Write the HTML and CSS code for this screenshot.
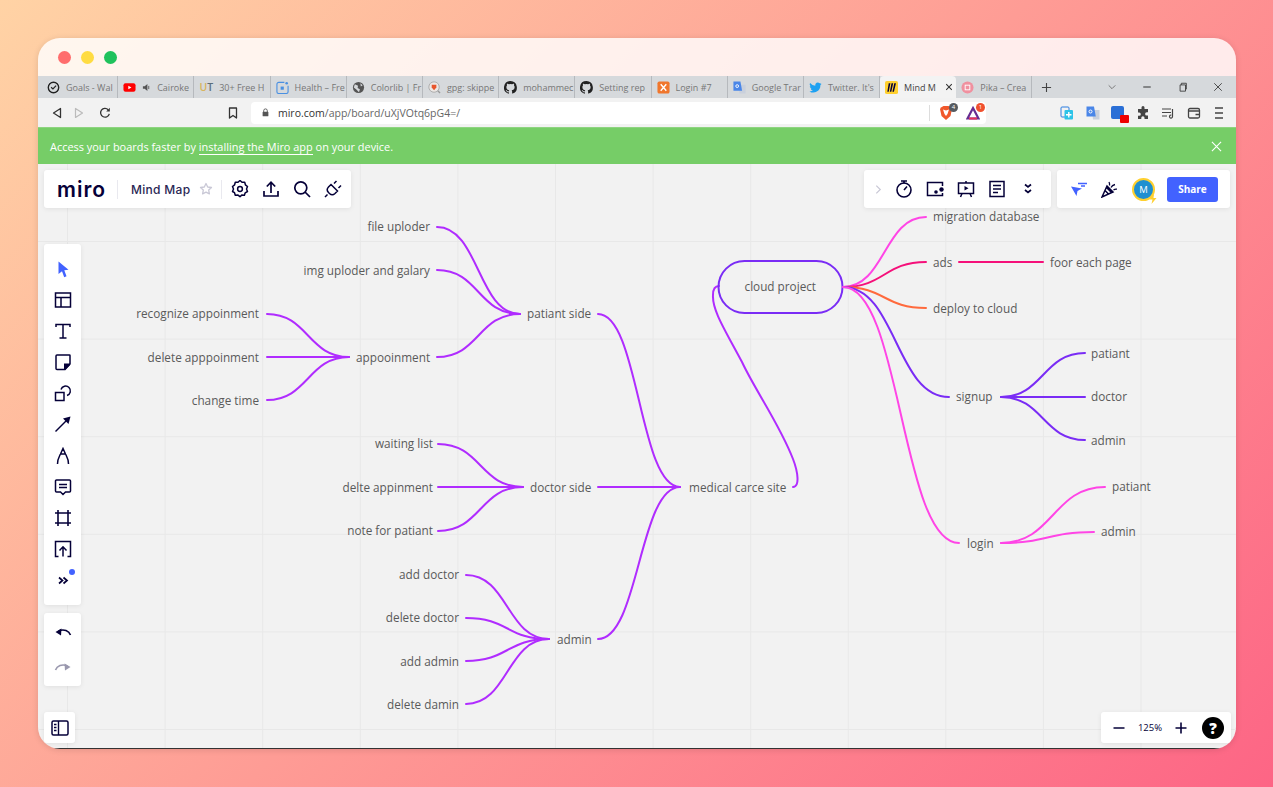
FILE: index.html
```html
<!DOCTYPE html>
<html>
<head>
    <title>Mind Map - Miro</title>
    <link rel="stylesheet" href="styles.css">
</head>
<body>
    <div class="window">
        <div class="title-bar">
            <span class="light light-red"></span>
            <span class="light light-yellow"></span>
            <span class="light light-green"></span>
        </div>

        <div class="tab-strip">
            <div class="tab">
                <svg class="tab-icon" viewBox="0 0 14 14"><circle cx="7" cy="7" r="5.6" fill="none" stroke="#222" stroke-width="1.5"/><path d="M4.4 6.8L6.4 8.6L9.8 5" fill="none" stroke="#222" stroke-width="1.3"/></svg>
                <span class="tab-text">Goals - Wal</span>
            </div>
            <div class="tab">
                <svg class="tab-icon" viewBox="0 0 14 14"><rect x="0.5" y="2.5" width="13" height="9" rx="2.2" fill="#f00"/><path d="M5.7 5v4l3.4-2z" fill="#fff"/></svg>
                <svg class="tab-sound" viewBox="0 0 10 10"><path d="M1 3.5h2L6 1v8L3 6.5H1z" fill="#555"/><path d="M7.5 3.2v3.6" stroke="#555"/></svg>
                <span class="tab-text">Cairoke</span>
            </div>
            <div class="tab">
                <span class="tab-ut"><b>U</b><i>T</i></span>
                <span class="tab-text">30+ Free H</span>
            </div>
            <div class="tab">
                <svg class="tab-icon" viewBox="0 0 14 14"><path d="M9 1.5H3a2 2 0 0 0-2 2v8a2 2 0 0 0 2 2h8a2 2 0 0 0 2-2V5" fill="none" stroke="#4a90e2" stroke-width="1.2"/><rect x="5" y="6" width="3.4" height="3.4" fill="#4a90e2"/><circle cx="11.5" cy="2.5" r="1.4" fill="#4a90e2"/></svg>
                <span class="tab-text">Health – Fre</span>
            </div>
            <div class="tab">
                <svg class="tab-icon" viewBox="0 0 14 14"><circle cx="7" cy="7" r="6" fill="#555"/><path d="M3 3.5L6.5 5L6 7.5L8.5 9L7.5 12L5 9.5L2 7zM9 2.5L11.5 4.5L9.5 6z" fill="#d6d9dc"/></svg>
                <span class="tab-text">Colorlib | Fr</span>
            </div>
            <div class="tab">
                <svg class="tab-icon" viewBox="0 0 14 14"><circle cx="6.5" cy="6.5" r="5.6" fill="#ece7e4" stroke="#aaa"/><path d="M4 4h5v3l-2.5 3L4 7z" fill="#e8552c"/><path d="M10.5 10.5l2.5 2.5" stroke="#999" stroke-width="1.4"/></svg>
                <span class="tab-text">gpg: skippe</span>
            </div>
            <div class="tab">
                <svg class="tab-icon" viewBox="0 0 16 16"><path d="M8 0a8 8 0 0 0-2.5 15.6c.4.1.5-.2.5-.4v-1.4c-2.2.5-2.7-1-2.7-1-.4-.9-.9-1.2-.9-1.2-.7-.5.1-.5.1-.5.8.1 1.2.8 1.2.8.7 1.2 1.9.9 2.3.7.1-.5.3-.9.5-1.100-1.800-.2-3.600-.9-3.600-4 0-.9.300-1.600.8-2.100-.1-.2-.4-1 .1-2.100 0 0 .7-.2 2.200.8a7.500 7.500 0 0 1 4 0c1.500-1 2.200-.8 2.200-.8.4 1.100.2 1.900.1 2.100.5.600.8 1.300.8 2.100 0 3.100-1.900 3.700-3.700 3.900.3.300.6.800.6 1.500v2.200c0 .2.100.5.600.4A8 8 0 0 0 8 0z" fill="#222"/></svg>
                <span class="tab-text">mohammec</span>
            </div>
            <div class="tab">
                <svg class="tab-icon" viewBox="0 0 16 16"><path d="M8 0a8 8 0 0 0-2.500 15.600c.4.100.5-.2.5-.4v-1.400c-2.200.5-2.700-1-2.700-1-.4-.9-.9-1.200-.9-1.200-.7-.5.1-.5.1-.5.8.1 1.200.8 1.200.8.7 1.200 1.900.9 2.300.7.100-.5.300-.9.500-1.100-1.800-.2-3.600-.9-3.600-4 0-.9.300-1.600.8-2.100-.1-.2-.4-1 .1-2.100 0 0 .7-.2 2.200.8a7.500 7.500 0 0 1 4 0c1.500-1 2.200-.8 2.200-.8.4 1.100.2 1.900.1 2.100.5.600.8 1.300.8 2.100 0 3.100-1.900 3.700-3.700 3.900.3.300.6.800.6 1.500v2.200c0 .2.100.5.600.4A8 8 0 0 0 8 0z" fill="#222"/></svg>
                <span class="tab-text">Setting rep</span>
            </div>
            <div class="tab">
                <svg class="tab-icon" viewBox="0 0 14 14"><rect x="0.5" y="0.5" width="13" height="13" rx="2" fill="#f0762c"/><path d="M4 3.5L7 7L4 10.5M10 3.5L7 7L10 10.5" fill="none" stroke="#fff" stroke-width="1.5"/></svg>
                <span class="tab-text">Login #7</span>
            </div>
            <div class="tab">
                <svg class="tab-icon" viewBox="0 0 14 14"><path d="M6 4h7.5v9.5H7z" fill="#c9d0dc"/><path d="M0.5 0.5h7.5l1.800 10H0.5z" fill="#4a86e8"/><circle cx="4.5" cy="5.5" r="1.5" fill="none" stroke="#fff"/></svg>
                <span class="tab-text">Google Trar</span>
            </div>
            <div class="tab">
                <svg class="tab-icon" viewBox="0 0 16 16"><path d="M15.500 3.300c-.6.300-1.200.4-1.800.5.600-.4 1.100-1 1.400-1.700-.6.400-1.300.6-2 .8a3.100 3.100 0 0 0-5.300 2.800A8.800 8.800 0 0 1 1.400 2.500a3.100 3.100 0 0 0 1 4.100c-.5 0-1-.2-1.400-.4 0 1.500 1.100 2.800 2.500 3.100-.5.100-.9.100-1.400.1.400 1.200 1.500 2.100 2.900 2.100A6.200 6.200 0 0 1 .5 12.800 8.800 8.800 0 0 0 14 5c.6-.4 1.100-1 1.500-1.700z" fill="#1da1f2"/></svg>
                <span class="tab-text">Twitter. It's</span>
            </div>
            <div class="tab tab-active">
                <svg class="tab-icon" viewBox="0 0 14 14"><rect width="14" height="14" rx="2" fill="#ffd02f"/><path d="M4 2.500L5.800 2.500L4 11.500L2.500 11.500zM7 2.500L8.800 2.500L6.800 11.500L5.200 11.500zM10 2.500L11.800 2.500L9.600 11.500L8 11.500z" fill="#050038"/></svg>
                <span class="tab-text">Mind M</span>
                <svg class="tab-close" viewBox="0 0 10 10"><path d="M1.500 1.500l7 7M8.500 1.500l-7 7" stroke="#333" stroke-width="1.300"/></svg>
            </div>
            <div class="tab">
                <svg class="tab-icon" viewBox="0 0 14 14"><circle cx="7" cy="7" r="6.500" fill="#f0909f"/><rect x="4.500" y="4.500" width="5" height="5" fill="none" stroke="#fff"/></svg>
                <span class="tab-text">Pika – Crea</span>
            </div>
            <svg class="tab-plus" viewBox="0 0 12 12"><path d="M6 1v10M1 6h10" stroke="#444" stroke-width="1.200"/></svg>
            <div class="window-controls">
                <svg class="win-btn" viewBox="0 0 12 12"><path d="M2 4l4 4 4-4" fill="none" stroke="#666"/></svg>
                <svg class="win-btn" viewBox="0 0 12 12"><path d="M1.500 6h9" stroke="#333" stroke-width="1.200"/></svg>
                <svg class="win-btn" viewBox="0 0 12 12"><path d="M2.500 3.500h6.500v7.500h-6.500zM4 3.500v-2h6v7h-1" fill="none" stroke="#333"/></svg>
                <svg class="win-btn" viewBox="0 0 12 12"><path d="M1.500 1.500l9 9M10.500 1.500l-9 9" stroke="#333"/></svg>
            </div>
        </div>

        <div class="nav-bar">
            <svg class="nav-icon nav-back" viewBox="0 0 12 12"><path d="M9.500 1.500v9L2.500 6z" fill="none" stroke="#333" stroke-width="1.300" stroke-linejoin="round"/></svg>
            <svg class="nav-icon nav-forward" viewBox="0 0 12 12"><path d="M2.500 1.500v9L9.500 6z" fill="none" stroke="#bbb" stroke-width="1.200" stroke-linejoin="round"/></svg>
            <svg class="nav-icon nav-reload" viewBox="0 0 12 12"><path d="M10.300 6.800A4.400 4.400 0 1 1 9.200 2.700" fill="none" stroke="#333" stroke-width="1.300"/><path d="M10.800 0.800v3.600H7.200z" fill="#333"/></svg>
            <svg class="nav-icon nav-bookmark" viewBox="0 0 12 12"><path d="M2.500 1h7v10L6 8.500 2.500 11z" fill="none" stroke="#333" stroke-width="1.300" stroke-linejoin="round"/></svg>
            <div class="url-field">
                <svg class="url-lock" viewBox="0 0 10 10"><path d="M3 4.500V3a2 2 0 0 1 4 0v1.500" fill="none" stroke="#555"/><rect x="1.800" y="4.300" width="6.400" height="5" rx="0.800" fill="#555"/></svg>
                <span class="url-text"><b>miro.com</b>/app/board/uXjVOtq6pG4=/</span>
                <span class="url-sep"></span>
                <span class="url-badge">
                    <svg viewBox="0 0 14 16"><path d="M2 2.500L4.500 1h5L12 2.500 13 4l-1.500 7L7 15l-4.500-4L1 4z" fill="#f1582c"/><path d="M4 4.500L7 5.500 10 4.500 8.500 9 7 11 5.500 9z" fill="#fff"/></svg>
                    <i class="badge-count badge-gray">4</i>
                </span>
                <span class="url-badge">
                    <svg viewBox="0 0 14 16"><path d="M7 3L12.500 13.500H1.500z" fill="none" stroke="#662d91" stroke-width="2.200"/><path d="M3 13.500h8" stroke="#e8315a" stroke-width="2.200"/></svg>
                    <i class="badge-count badge-red">1</i>
                </span>
            </div>
            <div class="ext-icons">
                <svg class="ext-icon" viewBox="0 0 14 14"><rect x="1" y="1" width="8" height="10" rx="1" fill="none" stroke="#2b7de0"/><rect x="4.500" y="4" width="8.500" height="9.500" rx="1" fill="#2cc3e8"/><path d="M8.800 6v5.500M6 8.700h5.500" stroke="#fff" stroke-width="1.400"/></svg>
                <svg class="ext-icon" viewBox="0 0 14 14"><path d="M6 4h7.500v9.500H7z" fill="#c9d0dc"/><path d="M0.500 0.500h7.500l1.800 10H0.500z" fill="#4a86e8"/><circle cx="4.500" cy="5.500" r="1.500" fill="none" stroke="#fff"/></svg>
                <span class="ext-blue"><i></i></span>
                <svg class="ext-icon" viewBox="0 0 14 14"><path d="M5.500 1.500a1.500 1.500 0 0 1 3 0V3H12v3.300h-1.300a1.600 1.600 0 0 0 0 3.200H12V13H8.500v-1.200a1.600 1.600 0 0 0-3.200 0V13H2V9.800h1.200a1.600 1.600 0 0 0 0-3.200H2V3h3.500z" fill="#444"/></svg>
                <svg class="ext-icon" viewBox="0 0 14 14"><path d="M1 3h9M1 6.500h9M1 10h5" stroke="#444" stroke-width="1.200"/><path d="M11.500 3v7.500a1.500 1.500 0 1 1-1.200-1.400" fill="none" stroke="#444" stroke-width="1.200"/></svg>
                <svg class="ext-icon" viewBox="0 0 14 14"><rect x="1.500" y="2.500" width="11" height="9.500" rx="1.500" fill="none" stroke="#444" stroke-width="1.300"/><path d="M1.500 5h11M8.500 8.500h4" stroke="#444" stroke-width="1.300"/></svg>
                <svg class="ext-icon" viewBox="0 0 14 14"><path d="M3 2h8M3 7h8M3 12h8" stroke="#444" stroke-width="1.300"/></svg>
            </div>
        </div>

        <div class="banner">
            <span>Access your boards faster by <u>installing the Miro app</u> on your device.</span>
            <svg class="banner-close" viewBox="0 0 12 12"><path d="M1 1l10 10M11 1L1 11" stroke="#fff" stroke-width="1.200"/></svg>
        </div>

        <div class="canvas">
            <svg class="mind-map" viewBox="38 164 1198 585">
                <g class="edges edges-purple">
                    <path d="M437 227C479 227 478 314 520 314"/>
                    <path d="M437 270C479 270 478 314 520 314"/>
                    <path d="M437 357C479 357 478 314 520 314"/>
                    <path d="M349 357C308 357 308 314 267 314"/>
                    <path d="M349 357H267"/>
                    <path d="M349 357C308 357 308 400 267 400"/>
                    <path d="M598 314C639 314 639 487 680 487"/>
                    <path d="M523 487C480 487 481 444 438 444"/>
                    <path d="M523 487H438"/>
                    <path d="M523 487C480 487 481 531 438 531"/>
                    <path d="M598 487H680"/>
                    <path d="M598 639C639 639 639 487 680 487"/>
                    <path d="M549 639C507 639 508 575 466 575"/>
                    <path d="M549 639C507 639 508 618 466 618"/>
                    <path d="M549 639C507 639 508 661 466 661"/>
                    <path d="M549 639C507 639 508 704 466 704"/>
                    <path d="M793 487C800 487 798 472 793 459C780 425 755 390 742 362C725 330 712 310 713 295C713 288 716 286 719 286"/>
                </g>
                <rect class="cloud-node" x="718.500" y="261" width="124" height="52" rx="26"/>
                <g class="edges">
                    <path class="edge-pink" d="M843 287C885 287 884 217 926 217"/>
                    <path class="edge-red" d="M843 287C885 287 884 262 926 262"/>
                    <path class="edge-red" d="M959 262H1043"/>
                    <path class="edge-orange" d="M843 287C885 287 884 308 926 308"/>
                    <path class="edge-violet" d="M843 287C896 287 896 397 949 397"/>
                    <path class="edge-pink" d="M843 287C901 287 901 543 959 543"/>
                    <path class="edge-violet" d="M1001 397C1043 397 1043 353 1085 353"/>
                    <path class="edge-violet" d="M1001 397H1085"/>
                    <path class="edge-violet" d="M1001 397C1043 397 1043 440 1085 440"/>
                    <path class="edge-pink" d="M1001 543C1053 543 1053 487 1105 487"/>
                    <path class="edge-pink" d="M1001 543C1048 543 1047 532 1094 532"/>
                </g>
                <g class="labels">
                    <text x="430" y="231" text-anchor="end">file uploder</text>
                    <text x="430" y="275" text-anchor="end">img uploder and galary</text>
                    <text x="259" y="318" text-anchor="end">recognize appoinment</text>
                    <text x="259" y="362" text-anchor="end">delete apppoinment</text>
                    <text x="259" y="405" text-anchor="end">change time</text>
                    <text x="356" y="362">appooinment</text>
                    <text x="527" y="318">patiant side</text>
                    <text x="433" y="448" text-anchor="end">waiting list</text>
                    <text x="433" y="492" text-anchor="end">delte appinment</text>
                    <text x="433" y="535" text-anchor="end">note for patiant</text>
                    <text x="530" y="492">doctor side</text>
                    <text x="459" y="579" text-anchor="end">add doctor</text>
                    <text x="459" y="622" text-anchor="end">delete doctor</text>
                    <text x="459" y="666" text-anchor="end">add admin</text>
                    <text x="459" y="709" text-anchor="end">delete damin</text>
                    <text x="557" y="644">admin</text>
                    <text x="689" y="492">medical carce site</text>
                    <text x="744.500" y="291">cloud project</text>
                    <text x="933" y="221">migration database</text>
                    <text x="933" y="267">ads</text>
                    <text x="1050" y="267">foor each page</text>
                    <text x="933" y="313">deploy to cloud</text>
                    <text x="956" y="401">signup</text>
                    <text x="1091" y="358">patiant</text>
                    <text x="1091" y="401">doctor</text>
                    <text x="1091" y="445">admin</text>
                    <text x="967" y="548">login</text>
                    <text x="1112" y="491">patiant</text>
                    <text x="1101" y="536">admin</text>
                </g>
            </svg>

            <div class="panel panel-board">
                <span class="miro-logo">miro</span>
                <span class="panel-sep"></span>
                <span class="board-name">Mind Map</span>
                <svg class="star-icon" viewBox="0 0 14 14"><path d="M7 1.500l1.700 3.500 3.800.5-2.800 2.600.7 3.800L7 10.100l-3.400 1.800.7-3.800L1.500 5.500l3.800-.5z" fill="none" stroke="#c9c8d6" stroke-width="1.300" stroke-linejoin="round"/></svg>
                <span class="panel-sep"></span>
                <svg class="tool-icon" viewBox="0 0 18 18"><path d="M9 1.500l2 1.800 2.700-.1.700 2.600 2.100 1.700-1 2.500 1 2.500-2.300 1.300-.8 2.500-2.700-.2-1.700 1.600-2-1.600-2.700.2-.8-2.600L1.500 12.500l1-2.500-1-2.500 2.100-1.700.7-2.600 2.700.1z" transform="translate(0 -1)" fill="none" stroke="#050038" stroke-width="1.500" stroke-linejoin="round"/><circle cx="9" cy="9" r="2.400" fill="none" stroke="#050038" stroke-width="1.500"/></svg>
                <svg class="tool-icon" viewBox="0 0 18 18"><path d="M2 11v5h14v-5M9 13V2.500M4.800 6.500L9 2.200l4.200 4.300" fill="none" stroke="#050038" stroke-width="1.700"/></svg>
                <svg class="tool-icon" viewBox="0 0 18 18"><circle cx="7.800" cy="7.800" r="6" fill="none" stroke="#050038" stroke-width="1.700"/><path d="M12 12l5 5" stroke="#050038" stroke-width="1.700"/></svg>
                <svg class="tool-icon" viewBox="0 0 18 18"><path d="M7 4.500l6.500 6.500-2.500 2.500a4 4 0 0 1-5.500 0l-1-1a4 4 0 0 1 0-5.500zM3.500 14.500L1 17M10 3.500L12.500 1M14.500 8L17 5.500" fill="none" stroke="#050038" stroke-width="1.500"/></svg>
            </div>

            <div class="panel panel-tools">
                <svg class="tool-icon" viewBox="0 0 18 18"><path d="M4.500 1.500l10 8.200-4.200.6 2.200 6-2.300.9-2.200-6-3.500 2.800z" fill="#4262ff"/></svg>
                <svg class="tool-icon" viewBox="0 0 18 18"><path d="M1.500 2h15v14h-15zM1.500 6.500h15M7 6.500V16" fill="none" stroke="#050038" stroke-width="1.500"/></svg>
                <svg class="tool-icon" viewBox="0 0 18 18"><path d="M2 5V2.500h14V5M9 2.500V16M5.500 16h7" fill="none" stroke="#050038" stroke-width="1.500"/></svg>
                <svg class="tool-icon" viewBox="0 0 18 18"><path d="M2 3a1 1 0 0 1 1-1h12.500a.5.5 0 0 1 .5.500V11l-5 5.500H3a1 1 0 0 1-1-1z" fill="none" stroke="#050038" stroke-width="1.500"/><path d="M16 10.500v1.500l-4.500 4.500H10v-6z" fill="#050038"/></svg>
                <svg class="tool-icon" viewBox="0 0 18 18"><path d="M1.500 8.500h8.500V16.500H1.500z" fill="none" stroke="#050038" stroke-width="1.500"/><path d="M7 5.500a4.800 4.800 0 1 1 6 6" fill="none" stroke="#050038" stroke-width="1.500"/></svg>
                <svg class="tool-icon" viewBox="0 0 18 18"><path d="M1.500 16.500L13 5" stroke="#050038" stroke-width="1.500"/><path d="M16.500 1.500l-2 7.500-5.500-5.500z" fill="#050038"/></svg>
                <svg class="tool-icon" viewBox="0 0 18 18"><path d="M3.500 17C3.500 12 5 10 6.500 7L9 1.500 11.500 7C13 10 14.500 12 14.500 17M6.500 7H11.500" fill="none" stroke="#050038" stroke-width="1.500"/></svg>
                <svg class="tool-icon" viewBox="0 0 18 18"><path d="M2.500 2h13a1 1 0 0 1 1 1v10a1 1 0 0 1-1 1h-4L9 16.500 6.500 14h-4a1 1 0 0 1-1-1V3a1 1 0 0 1 1-1z" fill="none" stroke="#050038" stroke-width="1.500"/><path d="M5 6.500h8M5 9.500h8" stroke="#050038" stroke-width="1.500"/></svg>
                <svg class="tool-icon" viewBox="0 0 18 18"><path d="M1 4h16M1 14h16M4 1v16M14 1v16" stroke="#050038" stroke-width="1.600"/></svg>
                <svg class="tool-icon" viewBox="0 0 18 18"><path d="M4.500 16.500h-3v-15h15v15h-3M9 16.500V7M5.500 10.500L9 6.800l3.500 3.700" fill="none" stroke="#050038" stroke-width="1.500"/></svg>
                <span class="more-tools">
                    <svg class="tool-icon" viewBox="0 0 18 18"><path d="M5 6.500L8.500 9.500 5 12.500M9.500 6.500l3.500 3-3.500 3" fill="none" stroke="#050038" stroke-width="1.700"/></svg>
                    <i class="more-dot"></i>
                </span>
            </div>

            <div class="panel panel-undo">
                <svg class="tool-icon" viewBox="0 0 18 18"><path d="M16.500 12C15 8 10 5.500 4.500 8" fill="none" stroke="#050038" stroke-width="1.600"/><path d="M1.500 9l5.500 3.500.5-7z" fill="#050038"/></svg>
                <svg class="tool-icon tool-dim" viewBox="0 0 18 18"><path d="M1.500 12C3 8 8 5.500 13.500 8" fill="none" stroke="#050038" stroke-width="1.600"/><path d="M16.500 9l-5.500 3.500-.5-7z" fill="#050038"/></svg>
            </div>

            <div class="panel panel-sidebar">
                <svg class="tool-icon" viewBox="0 0 18 18"><rect x="1" y="2" width="16" height="14" rx="1.500" fill="none" stroke="#050038" stroke-width="1.500"/><path d="M7.500 2v14M3 5.500h2.500M3 8.500h2.500M3 11.500h2.500" stroke="#050038" stroke-width="1.400"/></svg>
            </div>

            <div class="panel panel-actions">
                <svg class="action-chevron" viewBox="0 0 8 12"><path d="M1.500 1.500L6 6l-4.500 4.500" fill="none" stroke="#c9c8d6" stroke-width="1.400"/></svg>
                <svg class="tool-icon" viewBox="0 0 18 18"><circle cx="9" cy="10" r="7" fill="none" stroke="#050038" stroke-width="1.600"/><path d="M6 1h6M9 1v2.500M9 10l3-3.500" stroke="#050038" stroke-width="1.600"/></svg>
                <svg class="tool-icon" viewBox="0 0 18 18"><path d="M16.500 6V2.500h-15v13h15V13" fill="none" stroke="#050038" stroke-width="1.500"/><circle cx="15.500" cy="9.500" r="2.200" fill="#050038"/><circle cx="10" cy="12" r="1.800" fill="#050038"/></svg>
                <svg class="tool-icon" viewBox="0 0 18 18"><rect x="1.500" y="3" width="15" height="10.500" fill="none" stroke="#050038" stroke-width="1.500"/><path d="M9 1v2M5 13.500L3.500 17M13 13.500l1.500 3.500" stroke="#050038" stroke-width="1.500"/><path d="M7.500 6v4.500L11.500 8.200z" fill="#050038"/></svg>
                <svg class="tool-icon" viewBox="0 0 18 18"><rect x="2" y="1.500" width="14" height="15" fill="none" stroke="#050038" stroke-width="1.500"/><path d="M5 5.500h8M5 9h8M5 12.500h5" stroke="#050038" stroke-width="1.500"/></svg>
                <svg class="tool-icon" viewBox="0 0 18 18"><path d="M6 4.500l3 2.500 3-2.500M6 10l3 2.500 3-2.500" fill="none" stroke="#050038" stroke-width="1.700"/></svg>
            </div>

            <div class="panel panel-share">
                <svg class="tool-icon" viewBox="0 0 18 18"><path d="M1 6.500l11 2-4.500 2.500-1 5z" fill="#4262ff"/><path d="M8 3.500h9M11 6h4" stroke="#4262ff" stroke-width="1.300"/></svg>
                <svg class="tool-icon" viewBox="0 0 18 18"><path d="M1 17L6 6l6 6zM4 10.500l3.500 3.500M5.500 7.500l5 5" fill="none" stroke="#050038" stroke-width="1.500"/><path d="M10 7.500c1-2 2-2.500 4-3M12.500 10c1-.8 2-1 3.500-.8M8.500 5.500c.3-1.500 0-2.500-.5-3.500" fill="none" stroke="#050038" stroke-width="1.300"/></svg>
                <span class="avatar">M<svg class="avatar-bolt" viewBox="0 0 8 10"><path d="M5 0L0.500 5.500h3L2.500 10 7.500 4H4.500z" fill="#ffd02f"/></svg></span>
                <span class="share-button">Share</span>
            </div>

            <div class="panel panel-zoom">
                <svg class="zoom-icon" viewBox="0 0 12 12"><path d="M0.500 6h11" stroke="#050038" stroke-width="1.600"/></svg>
                <span class="zoom-value">125%</span>
                <svg class="zoom-icon" viewBox="0 0 12 12"><path d="M0.500 6h11M6 0.500v11" stroke="#050038" stroke-width="1.600"/></svg>
                <span class="help-button">?</span>
            </div>
        </div>
    </div>
</body>
</html>
```

FILE: styles.css
```css
html, body {
    margin: 0;
    height: 100%;
}
body {
    box-sizing: border-box;
    height: 787px;
    padding: 38px 37px 38px 38px;
    background: linear-gradient(135deg, #ffd3a5 0%, #fd6585 100%);
    font-family: 'Open Sans', sans-serif;
    overflow: hidden;
}
.window {
    display: flex;
    flex-direction: column;
    height: 100%;
    border-radius: 22px;
    overflow: hidden;
    box-shadow: 0 1px 6px rgba(0,0,0,0.12);
}

/* traffic lights */
.title-bar {
    display: flex;
    align-items: center;
    gap: 10px;
    height: 38px;
    padding-left: 19.5px;
    flex-shrink: 0;
    background: rgba(255,255,255,0.82);
}
.light {
    width: 13px;
    height: 13px;
    border-radius: 50%;
}
.light-red { background-color: #ff6d6d; }
.light-yellow { background-color: #ffdc42; }
.light-green { background-color: #1fc25c; }

/* tabs */
.tab-strip {
    display: flex;
    align-items: center;
    height: 22px;
    padding-left: 4px;
    flex-shrink: 0;
    background-color: #d6d9dc;
}
.tab {
    display: flex;
    align-items: center;
    gap: 6px;
    box-sizing: border-box;
    width: 76.2px;
    height: 22px;
    padding: 0 3px 0 5px;
    border-right: 1px solid #b6b9bd;
    overflow: hidden;
    flex-shrink: 0;
}
.tab-active {
    background-color: #f3f3f3;
    border-radius: 4px 4px 0 0;
    border-right: none;
}
.tab-icon {
    width: 13px;
    height: 13px;
    flex-shrink: 0;
}
.tab-sound {
    width: 9px;
    height: 9px;
    flex-shrink: 0;
}
.tab-ut {
    font-size: 10.5px;
    font-weight: 600;
    flex-shrink: 0;
}
.tab-ut b { color: #d8b45c; font-weight: 600; }
.tab-ut i { color: #5a6d7a; font-style: normal; }
.tab-text {
    font-size: 9px;
    color: #777;
    white-space: nowrap;
    flex: 1;
}
.tab-active .tab-text { color: #444; }
.tab-close {
    width: 8px;
    height: 8px;
    flex-shrink: 0;
}
.tab-plus {
    width: 11px;
    height: 11px;
    margin-left: 9px;
}
.window-controls {
    display: flex;
    align-items: center;
    margin-left: auto;
    gap: 25.5px;
    padding-right: 13px;
}
.win-btn {
    width: 10px;
    height: 10px;
}

/* address bar */
.nav-bar {
    display: flex;
    align-items: center;
    height: 29px;
    padding-left: 13px;
    flex-shrink: 0;
    background-color: #f2f2f2;
}
.nav-icon {
    width: 12px;
    height: 12px;
    flex-shrink: 0;
}
.nav-forward { margin-left: 10px; }
.nav-reload { margin-left: 14px; }
.nav-bookmark { margin-left: 116px; }
.url-field {
    display: flex;
    align-items: center;
    width: 735px;
    height: 22px;
    margin-left: 12px;
    padding-left: 10px;
    box-sizing: border-box;
    background-color: #fff;
    border-radius: 4px;
    flex-shrink: 0;
}
.url-lock {
    width: 9px;
    height: 9px;
    flex-shrink: 0;
}
.url-text {
    margin-left: 8px;
    font-size: 10.5px;
    color: #666;
}
.url-text b {
    font-weight: 400;
    color: #333;
}
.url-sep {
    width: 1px;
    height: 16px;
    margin-left: auto;
    background-color: #ddd;
}
.url-badge {
    position: relative;
    width: 14px;
    height: 16px;
    margin-left: 9px;
    margin-right: 3px;
}
.url-badge + .url-badge {
    margin-left: 10px;
    margin-right: 6px;
}
.url-badge svg {
    display: block;
    width: 14px;
    height: 16px;
}
.badge-count {
    position: absolute;
    top: -2px;
    right: -5px;
    width: 9px;
    height: 9px;
    border-radius: 50%;
    font-size: 6px;
    line-height: 9px;
    font-style: normal;
    text-align: center;
    color: #fff;
}
.badge-gray { background-color: #555a60; }
.badge-red { background-color: #f0502e; }
.ext-icons {
    display: flex;
    align-items: center;
    gap: 11.5px;
    margin-left: 74px;
}
.ext-icon {
    width: 14px;
    height: 14px;
    flex-shrink: 0;
}
.ext-blue {
    position: relative;
    width: 13px;
    height: 13px;
    background-color: #2a6fd6;
    border-radius: 2px;
}
.ext-blue i {
    position: absolute;
    right: -5px;
    bottom: -4px;
    width: 9px;
    height: 8px;
    background-color: #ee0000;
    border-radius: 1px;
}

/* install banner */
.banner {
    display: flex;
    align-items: center;
    justify-content: space-between;
    height: 37px;
    padding: 0 14px 0 12px;
    flex-shrink: 0;
    background-color: #76cd67;
    border-top: 1px solid #8ed480;
    box-sizing: border-box;
    font-size: 10.95px;
    color: #fff;
}
.banner u {
    text-decoration: none;
    border-bottom: 1px solid #fff;
}
.banner-close {
    width: 11px;
    height: 11px;
}

/* board */
.canvas {
    position: relative;
    flex: 1;
    background-color: #f2f2f2;
    background-image:
        linear-gradient(to right, #e8e8e8 1px, transparent 1px),
        linear-gradient(to bottom, #e8e8e8 1px, transparent 1px);
    background-size: 97.6px 97.6px;
    background-position: 29px 77px;
    border-bottom: 1px solid #333;
    overflow: hidden;
}
.mind-map {
    display: block;
    width: 1198px;
    height: 585px;
}
.edges path {
    fill: none;
    stroke-width: 2;
    stroke-linecap: round;
}
.edges-purple path { stroke: #b02cff; }
.edge-pink { stroke: #ff45e6; }
.edge-red { stroke: #f5107a; }
.edge-orange { stroke: #ff6a3d; }
.edge-violet { stroke: #7a2cf5; }
.cloud-node {
    fill: none;
    stroke: #7a2cf5;
    stroke-width: 2;
}
.labels text {
    font-size: 11.75px;
    fill: #5a5a5a;
}

/* floating panels */
.panel {
    position: absolute;
    display: flex;
    align-items: center;
    background-color: #fff;
    border-radius: 3px;
    box-shadow: 0 1px 5px rgba(0,0,0,0.08);
    box-sizing: border-box;
}
.tool-icon {
    width: 18px;
    height: 18px;
    flex-shrink: 0;
}
.tool-dim { opacity: 0.4; }
.panel-board {
    top: 6px;
    left: 6px;
    width: 307px;
    height: 38px;
    padding-left: 13px;
}
.miro-logo {
    font-family: Inter, sans-serif;
    font-size: 21px;
    font-weight: 600;
    letter-spacing: 1px;
    color: #050038;
    width: 48px;
    flex-shrink: 0;
}
.panel-sep {
    width: 1px;
    height: 19px;
    margin: 0 13px 0 12px;
    background-color: #e9e9ef;
    flex-shrink: 0;
}
.board-name {
    font-family: Inter, sans-serif;
    font-size: 12px;
    font-weight: 500;
    letter-spacing: 0.3px;
    color: #2a2754;
    white-space: nowrap;
}
.star-icon {
    width: 14px;
    height: 14px;
    margin-left: 9px;
    flex-shrink: 0;
}
.star-icon + .panel-sep {
    margin: 0 9px 0 8px;
}
.panel-board .tool-icon {
    margin-right: 13px;
}
.panel-tools {
    top: 80px;
    left: 6px;
    width: 37px;
    height: 361px;
    padding: 15.5px 0;
    flex-direction: column;
    justify-content: space-between;
}
.more-tools {
    position: relative;
    display: flex;
}
.more-dot {
    position: absolute;
    top: -2px;
    right: -3.5px;
    width: 6px;
    height: 6px;
    border-radius: 50%;
    background-color: #4262ff;
}
.panel-undo {
    top: 449px;
    left: 6px;
    width: 37px;
    height: 73px;
    padding: 10px 0;
    flex-direction: column;
    justify-content: space-between;
}
.panel-sidebar {
    top: 548px;
    left: 6px;
    width: 31px;
    height: 31px;
    justify-content: center;
}
.panel-actions {
    top: 6px;
    left: 826px;
    width: 187px;
    height: 38px;
    padding-left: 11px;
}
.action-chevron {
    width: 7px;
    height: 11px;
    margin-right: 13px;
    flex-shrink: 0;
}
.panel-actions .tool-icon { margin-right: 13px; }
.panel-share {
    top: 6px;
    left: 1019px;
    width: 173px;
    height: 38px;
    padding-left: 13px;
}
.panel-share .tool-icon { margin-right: 13px; }
.avatar {
    position: relative;
    box-sizing: border-box;
    width: 23px;
    height: 23px;
    border: 2px solid #ffd02f;
    border-radius: 50%;
    background-color: #1f8fd0;
    font-size: 9.5px;
    line-height: 19px;
    text-align: center;
    color: #fff;
    flex-shrink: 0;
}
.avatar-bolt {
    position: absolute;
    right: -4px;
    bottom: -5px;
    width: 8px;
    height: 10px;
}
.share-button {
    width: 51px;
    height: 25px;
    margin-left: 12px;
    background-color: #4262ff;
    border-radius: 3px;
    font-size: 10px;
    font-weight: 700;
    line-height: 25px;
    text-align: center;
    color: #fff;
    flex-shrink: 0;
}
.panel-zoom {
    top: 548px;
    left: 1063px;
    width: 130px;
    height: 31px;
    padding-left: 12px;
}
.zoom-icon {
    width: 12px;
    height: 12px;
    flex-shrink: 0;
}
.zoom-value {
    width: 50px;
    font-size: 9.5px;
    color: #050038;
    text-align: center;
    flex-shrink: 0;
}
.help-button {
    width: 22px;
    height: 22px;
    margin-left: 15px;
    border-radius: 50%;
    background-color: #000;
    font-size: 15px;
    font-weight: 800;
    line-height: 22px;
    text-align: center;
    color: #fff;
    flex-shrink: 0;
}
```
